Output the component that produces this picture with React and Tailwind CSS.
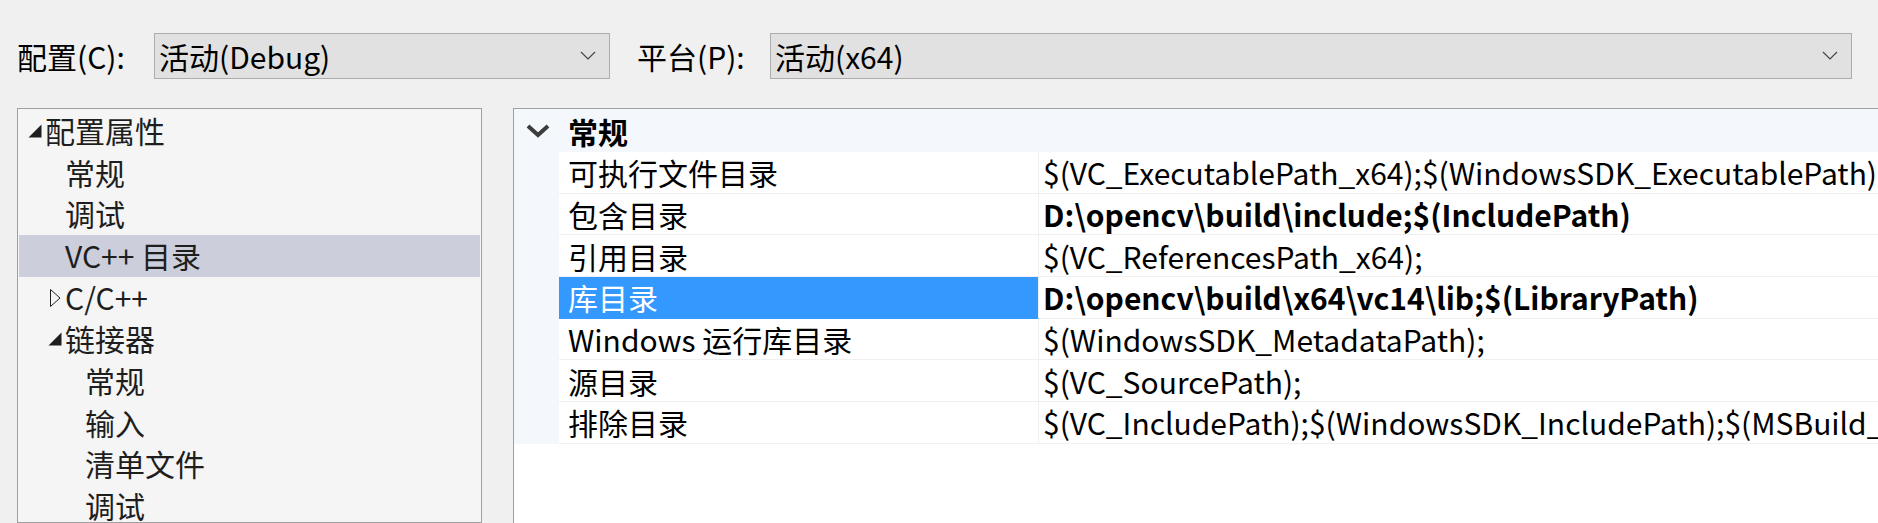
import React from 'react';

const FONT = { fontFamily: '"Noto Sans CJK SC", "Noto Sans", sans-serif' };

const treeItems = [
  { label: '配置属性', level: 0, toggle: 'open' },
  { label: '常规', level: 1 },
  { label: '调试', level: 1 },
  { label: 'VC++ 目录', level: 1, selected: true },
  { label: 'C/C++', level: 1, toggle: 'closed' },
  { label: '链接器', level: 1, toggle: 'open' },
  { label: '常规', level: 2 },
  { label: '输入', level: 2 },
  { label: '清单文件', level: 2 },
  { label: '调试', level: 2 },
];

const props = [
  { name: '可执行文件目录', value: '$(VC_ExecutablePath_x64);$(WindowsSDK_ExecutablePath);$(VS_ExecutablePath);$(MSBuild_ExecutablePath)' },
  { name: '包含目录', value: 'D:\\opencv\\build\\include;$(IncludePath)', bold: true },
  { name: '引用目录', value: '$(VC_ReferencesPath_x64);' },
  { name: '库目录', value: 'D:\\opencv\\build\\x64\\vc14\\lib;$(LibraryPath)', bold: true, selected: true },
  { name: 'Windows 运行库目录', value: '$(WindowsSDK_MetadataPath);' },
  { name: '源目录', value: '$(VC_SourcePath);' },
  { name: '排除目录', value: '$(VC_IncludePath);$(WindowsSDK_IncludePath);$(MSBuild_ExecutablePath);$(VC_LibraryPath_x64)' },
];

const DropChevron = () => (
  <svg width="16" height="10" viewBox="0 0 16 10" className="shrink-0">
    <polyline points="1,1 8,8 15,1" fill="none" stroke="#444" strokeWidth="1.2" />
  </svg>
);

const Dropdown = ({ text, className }) => (
  <div className={`h-[46px] flex items-center justify-between bg-[#e1e1e1] border border-[#adadad] pl-[4px] pr-[13px] ${className}`}>
    <span className="text-[30px] leading-none text-black">{text}</span>
    <DropChevron />
  </div>
);

const Toggle = ({ kind }) => {
  if (kind === 'open') {
    return (
      <svg width="14" height="14" viewBox="0 0 14 14">
        <polygon points="13.5,0.5 13.5,13.5 0.5,13.5" fill="#1e1e1e" />
      </svg>
    );
  }
  if (kind === 'closed') {
    return (
      <svg width="11" height="18" viewBox="0 0 11 18">
        <polygon points="0.5,0.5 10,9 0.5,17.5" fill="none" stroke="#1e1e1e" strokeWidth="1" />
      </svg>
    );
  }
  return null;
};

export default function App() {
  return (
    <div className="w-[1878px] h-[523px] bg-[#f0f0f0] overflow-hidden text-black" style={FONT}>
      {/* top: configuration / platform */}
      <div className="h-[108px] flex items-start pt-[33px]">
        <span className="ml-[17px] w-[137px] text-[30px] leading-[46px]">配置(C):</span>
        <Dropdown text="活动(Debug)" className="w-[456px]" />
        <span className="ml-[27px] w-[133px] text-[30px] leading-[46px]">平台(P):</span>
        <Dropdown text="活动(x64)" className="w-[1082px]" />
      </div>

      <div className="flex h-[415px]">
        {/* tree */}
        <div className="ml-[17px] w-[465px] shrink-0 bg-[#f5f5f5] border border-[#a0a0a0] pt-[1px] pl-[1px] pr-[1px]">
          {treeItems.map((item, i) => (
            <div
              key={i}
              className={`h-[41.7px] flex items-center ${item.selected ? 'bg-[#cccedb]' : ''}`}
            >
              <div
                className="w-[20px] shrink-0 flex items-center justify-center"
                style={{ marginLeft: 6 + item.level * 20 }}
              >
                <Toggle kind={item.toggle} />
              </div>
              <span className="ml-[0px] text-[30px] leading-none whitespace-nowrap text-[#1e1e1e] -mt-[2px]">{item.label}</span>
            </div>
          ))}
        </div>

        {/* property grid */}
        <div className="ml-[31px] flex-1 bg-white border-l border-t border-[#a0a0a0] overflow-hidden">
          <div className="h-[43px] flex items-center bg-[#f4f7fc]">
            <div className="w-[45px] shrink-0 flex justify-center pl-[2px]">
              <svg width="24" height="14" viewBox="0 0 24 14">
                <polyline points="2,2 12,11 22,2" fill="none" stroke="#3c3c3c" strokeWidth="4" />
              </svg>
            </div>
            <span className="ml-[9px] text-[30px] leading-none font-bold">常规</span>
          </div>
          {props.map((p, i) => (
            <div key={i} className="h-[41.7px] flex">
              <div className="w-[45px] shrink-0 bg-[#f4f7fc]" />
              <div
                className={`w-[480px] shrink-0 flex items-center pl-[9px] border-b border-r border-[#f0f0f0] ${
                  p.selected ? 'bg-[#3399ff] text-white border-b-[#3399ff]' : 'bg-white'
                }`}
              >
                <span className="text-[30px] leading-none whitespace-nowrap">{p.name}</span>
              </div>
              <div className="flex-1 min-w-0 flex items-center pl-[4px] border-b border-[#f0f0f0] overflow-hidden">
                <span className={`text-[30px] leading-none whitespace-nowrap ${p.bold ? 'font-bold' : ''}`}>
                  {p.value}
                </span>
              </div>
            </div>
          ))}
        </div>
      </div>
    </div>
  );
}
